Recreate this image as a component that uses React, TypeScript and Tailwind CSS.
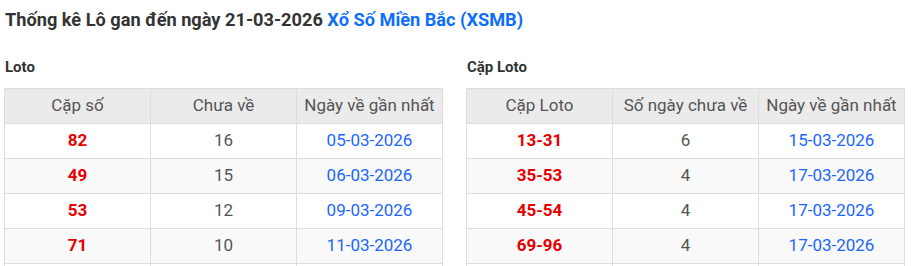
import React from "react";

const loto = [
  ["82", "16", "05-03-2026"],
  ["49", "15", "06-03-2026"],
  ["53", "12", "09-03-2026"],
  ["71", "10", "11-03-2026"],
  ["", "", ""],
];
const cap = [
  ["13-31", "6", "15-03-2026"],
  ["35-53", "4", "17-03-2026"],
  ["45-54", "4", "17-03-2026"],
  ["69-96", "4", "17-03-2026"],
  ["", "", ""],
];

function Table({ head, rows }: { head: string[]; rows: string[][] }) {
  return (
    <table className="w-[439px] table-fixed border-collapse border border-[#dddddd] text-[17px]">
      <thead>
        <tr className="h-[35px] bg-[#ebebeb]">
          {head.map((h, i) => (
            <th key={i} className="border border-[#dddddd] font-normal text-[#555555] p-0">
              {h}
            </th>
          ))}
        </tr>
      </thead>
      <tbody>
        {rows.map((r, i) => (
          <tr key={i} className={`h-[35px] ${i % 2 === 1 ? "bg-[#f9f9f9]" : "bg-white"}`}>
            <td className="border border-[#dddddd] text-center font-bold text-[#e60000] p-0">{r[0]}</td>
            <td className="border border-[#dddddd] text-center text-[#555555] p-0">{r[1]}</td>
            <td className="border border-[#dddddd] text-center text-[#1a66ff] p-0">{r[2]}</td>
          </tr>
        ))}
      </tbody>
    </table>
  );
}

export default function App() {
  return (
    <div className="w-[915px] h-[266px] overflow-hidden bg-white pl-[4px] pt-[7px] font-['Roboto',sans-serif]">
      <h2 className="text-[18.2px] leading-[26px] font-bold text-[#333333] pl-[1px]">
        Thống kê Lô gan đến ngày 21-03-2026 <span className="text-[#0d6efd]">Xổ Số Miền Bắc (XSMB)</span>
      </h2>
      <div className="flex gap-[23px] mt-[24px]">
        <div className="flex flex-col">
          <h3 className="text-[15px] leading-[20px] font-bold text-[#333333] pl-[1px] mb-[11px]">Loto</h3>
          <Table head={["Cặp số", "Chưa về", "Ngày về gần nhất"]} rows={loto} />
        </div>
        <div className="flex flex-col">
          <h3 className="text-[15px] leading-[20px] font-bold text-[#333333] pl-[1px] mb-[11px]">Cặp Loto</h3>
          <Table head={["Cặp Loto", "Số ngày chưa về", "Ngày về gần nhất"]} rows={cap} />
        </div>
      </div>
    </div>
  );
}
